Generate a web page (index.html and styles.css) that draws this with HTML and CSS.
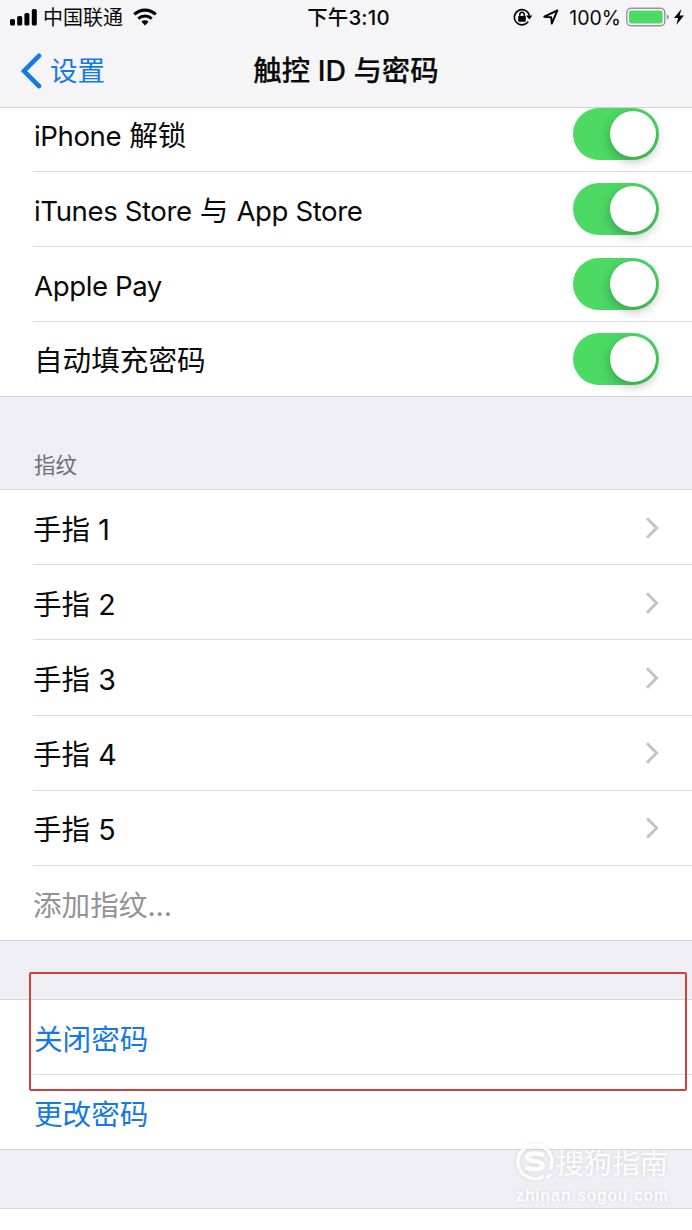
FILE: index.html
```html
<!DOCTYPE html>
<html lang="zh-CN">
<head>
  <meta charset="UTF-8">
  <meta name="viewport" content="width=device-width, initial-scale=1">
  <title>触控 ID 与密码</title>
  <link rel="stylesheet" href="styles.css">
</head>

<body>

  <!-- Header -->
  <header class="header">
    <div class="statusbar">
      <div class="status-left">
        <svg class="signal" width="28" height="18" viewBox="0 0 28 18">
          <rect x="0" y="11" width="5" height="6.5" rx="1.6"/>
          <rect x="7.2" y="8" width="5" height="9.5" rx="1.6"/>
          <rect x="14.4" y="5" width="5" height="12.5" rx="1.6"/>
          <rect x="21.8" y="1" width="5" height="16.5" rx="1.6"/>
        </svg>
        <span class="carrier">中国联通</span>
        <svg class="wifi" width="24" height="18" viewBox="0 0 24 18">
          <path d="M1.3 6.3 A15.6 15.6 0 0 1 22.7 6.3" fill="none" stroke="#000" stroke-width="3.2"/>
          <path d="M5.3 10.6 A10 10 0 0 1 18.7 10.6" fill="none" stroke="#000" stroke-width="3"/>
          <path d="M12 17.5 L8.4 13.8 A5.2 5.2 0 0 1 15.6 13.8 Z"/>
        </svg>
      </div>
      <div class="status-time">下午3:10</div>
      <div class="status-right">
        <svg class="lock" width="20" height="18" viewBox="0 0 20 18">
          <path d="M15.2 13.6 A7.6 7.6 0 1 1 16.4 7.6" fill="none" stroke="#000" stroke-width="1.6"/>
          <path d="M13 7.6 H19.4 L16.4 11.4 Z"/>
          <rect x="5.2" y="8" width="7.6" height="5.8" rx=".8"/>
          <path d="M6.8 8.4 V6.5 A2.2 2.2 0 0 1 11.2 6.5 V8.4" fill="none" stroke="#000" stroke-width="1.4"/>
        </svg>
        <svg class="location" width="16" height="16" viewBox="0 0 16 16">
          <path d="M1.3 7.7 L14.4 1.4 L8.8 14.6 L8.2 8.2 Z" fill="none" stroke="#000" stroke-width="1.9" stroke-linejoin="round"/>
        </svg>
        <span class="percent">100%</span>
        <svg class="battery" width="44" height="20" viewBox="0 0 44 20">
          <rect x=".8" y="1.3" width="38" height="17.4" rx="4.2" fill="#fff" stroke="#97939a" stroke-width="1.4"/>
          <rect x="3" y="3.5" width="33.6" height="13" rx="2" fill="#4cd964"/>
          <path d="M40.8 7.4 Q43 8 43 10 T40.8 12.6 Z" fill="#97939a"/>
        </svg>
        <svg class="bolt" width="10" height="16" viewBox="0 0 10 16">
          <path d="M7.4 0 L0 9 H4.2 L2.2 16 L10 6.6 H5.6 Z"/>
        </svg>
      </div>
    </div>
    <div class="navbar">
      <a class="back">
        <svg width="22" height="36" viewBox="0 0 22 36">
          <path d="M19 2.8 L4 18 L19 33.2" fill="none" stroke="#1478e6" stroke-width="4.6" stroke-linecap="round" stroke-linejoin="miter"/>
        </svg>
        <span>设置</span>
      </a>
      <h1>触控 ID 与密码</h1>
    </div>
  </header>

  <!-- Touch ID usage -->
  <ul class="list usage">
    <li class="row"><span class="name"><span class="latin">iPhone</span> 解锁</span><i class="toggle"></i></li>
    <li class="row"><span class="name"><span class="latin">iTunes Store</span> 与 <span class="latin">App Store</span></span><i class="toggle"></i></li>
    <li class="row"><span class="name"><span class="latin">Apple Pay</span></span><i class="toggle"></i></li>
    <li class="row"><span class="name">自动填充密码</span><i class="toggle"></i></li>
  </ul>

  <!-- Fingerprints -->
  <h2 class="section-title">指纹</h2>
  <ul class="list fingers">
    <li class="row"><span class="name">手指 1</span><svg class="chevron" width="14" height="24" viewBox="0 0 14 24"><path d="M2 2.2 L11.6 12 L2 21.8"/></svg></li>
    <li class="row"><span class="name">手指 2</span><svg class="chevron" width="14" height="24" viewBox="0 0 14 24"><path d="M2 2.2 L11.6 12 L2 21.8"/></svg></li>
    <li class="row"><span class="name">手指 3</span><svg class="chevron" width="14" height="24" viewBox="0 0 14 24"><path d="M2 2.2 L11.6 12 L2 21.8"/></svg></li>
    <li class="row"><span class="name">手指 4</span><svg class="chevron" width="14" height="24" viewBox="0 0 14 24"><path d="M2 2.2 L11.6 12 L2 21.8"/></svg></li>
    <li class="row"><span class="name">手指 5</span><svg class="chevron" width="14" height="24" viewBox="0 0 14 24"><path d="M2 2.2 L11.6 12 L2 21.8"/></svg></li>
    <li class="row muted"><span class="name">添加指纹...</span></li>
  </ul>

  <!-- Passcode -->
  <div class="passcode">
    <ul class="list">
      <li class="row link"><span class="name">关闭密码</span></li>
      <li class="row link"><span class="name">更改密码</span></li>
    </ul>
    <div class="highlight"></div>
  </div>

  <div class="footer">
    <div class="watermark">
      <div class="brand">
        <svg width="38" height="38" viewBox="0 0 38 38">
          <path d="M27.6 33.5 A17 17 0 1 1 34.4 26" fill="none" stroke="#fff" stroke-width="3.2"/>
          <path d="M30.5 35 L35.5 31" stroke="#fff" stroke-width="2.4"/>
          <path d="M28 12.2 C22 10 11.5 9.8 11.5 14.4 C11.5 19 26.5 17.2 26.5 22.3 C26.5 27.4 15 26.8 9.5 24.2" fill="none" stroke="#fff" stroke-width="4.8"/>
        </svg>
        <span>搜狗指南</span>
      </div>
      <div class="site">zhinan.sogou.com</div>
    </div>
  </div>

</body>
</html>
```
FILE: styles.css
```css
* {
  box-sizing: border-box;
}

body {
  margin: 0;
  height: 1230px;
  overflow: hidden;
  background: #fff;
  color: #0a0a0a;
  font-family: Inter, "Noto Sans CJK SC", sans-serif;
}

/* Header */
.header {
  position: relative;
  z-index: 1;
  height: 108px;
  background: #f5f5f8;
  border-bottom: 1px solid #cfcfd2;
}

.statusbar {
  display: grid;
  grid-template-columns: 1fr auto 1fr;
  align-items: center;
  height: 34px;
  padding: 0 8px 0 10px;
  font-size: 20px;
  line-height: 34px;
}

.status-left, .status-right {
  display: flex;
  align-items: center;
}

.status-left svg, .status-right svg {
  margin-top: -1px;
}

.status-right {
  justify-content: flex-end;
}

.carrier {
  margin-left: 5px;
}

.wifi {
  margin-left: 10px;
}

.status-time {
  padding: 0 0 0 3px;
  font-size: 20.4px;
  font-weight: 500;
  letter-spacing: .2px;
}

.lock {
  margin-right: 10px;
}

.location {
  margin-right: 10px;
}

.percent {
  padding-top: 1px;
  font-size: 19.5px;
}

.battery {
  margin: 0 4px 0 5px;
}

.navbar {
  display: grid;
  grid-template-columns: 1fr auto 1fr;
  align-items: center;
  height: 73px;
  padding: 0 20px;
}

.back {
  display: flex;
  align-items: center;
  gap: 8px;
  color: #1478e6;
  font-size: 27.5px;
}

.back span {
  margin-top: -4px;
}

.navbar h1 {
  margin: -5px 0 0;
  font-size: 28.4px;
  font-weight: 500;
  -webkit-text-stroke: .2px #0a0a0a;
}

/* Lists */
.list {
  margin: 0;
  padding: 0;
  list-style: none;
  background: #fff;
}

.row {
  display: flex;
  align-items: center;
  justify-content: space-between;
  height: 75.2px;
  margin-left: 33px;
  padding-right: 33px;
  border-bottom: 1px solid #dcdce0;
  font-size: 28.6px;
}

.row:last-child {
  margin-left: 0;
  padding-left: 33px;
  border-color: #d5d5da;
}

.name {
  padding-left: 1px;
}

.fingers .name {
  padding-left: 0;
}

.latin {
  font-size: 27.6px;
  letter-spacing: -.4px;
}

.usage {
  margin-top: -11px;
}

.usage .row {
  height: 75px;
}

.usage .name {
  padding-top: 3px;
  line-height: 42px;
}

.link {
  color: #1478e6;
}

.muted {
  color: #929297;
}

.toggle {
  display: flex;
  justify-content: flex-end;
  width: 86px;
  height: 52px;
  padding: 3px;
  border-radius: 26px;
  background: #4cd964;
}

.toggle::after {
  content: "";
  width: 46px;
  height: 46px;
  border-radius: 50%;
  background: #fff;
  box-shadow: 0 4px 12px rgba(0, 0, 0, .28);
}

.chevron {
  margin-top: 1px;
}

.chevron path {
  fill: none;
  stroke: #c4c4c8;
  stroke-width: 3;
}

.section-title {
  height: 93px;
  margin: 0;
  padding: 52px 34px 0;
  background: #efeef4;
  border-bottom: 1px solid #d5d5da;
  color: #6f6f74;
  font-size: 21.5px;
  font-weight: 400;
  line-height: 32px;
}

/* Passcode */
.passcode {
  position: relative;
  padding-top: 58px;
  background: #efeef4;
}

.passcode .list {
  border-top: 1px solid #d5d5da;
}

.passcode .row {
  height: 75px;
}

.highlight {
  position: absolute;
  top: 31px;
  left: 29px;
  right: 5px;
  height: 119px;
  border: 2px solid #d0403c;
  border-radius: 2px;
}

.footer {
  position: relative;
  height: 59px;
  background: #efeef4;
  border-bottom: 1px solid #d5d5da;
}

/* Watermark */
.watermark {
  position: absolute;
  top: -7px;
  left: 516px;
  color: #fff;
  opacity: .85;
  filter: drop-shadow(0 0 2px rgba(0, 0, 0, .12));
}

.brand {
  display: flex;
  align-items: center;
  gap: 2px;
  height: 38px;
  font-size: 28px;
}

.site {
  font-family: "Liberation Sans", sans-serif;
  font-size: 16px;
  letter-spacing: 1.45px;
  line-height: 20px;
  margin-top: 5px;
  -webkit-text-stroke: .4px #fff;
}
```
